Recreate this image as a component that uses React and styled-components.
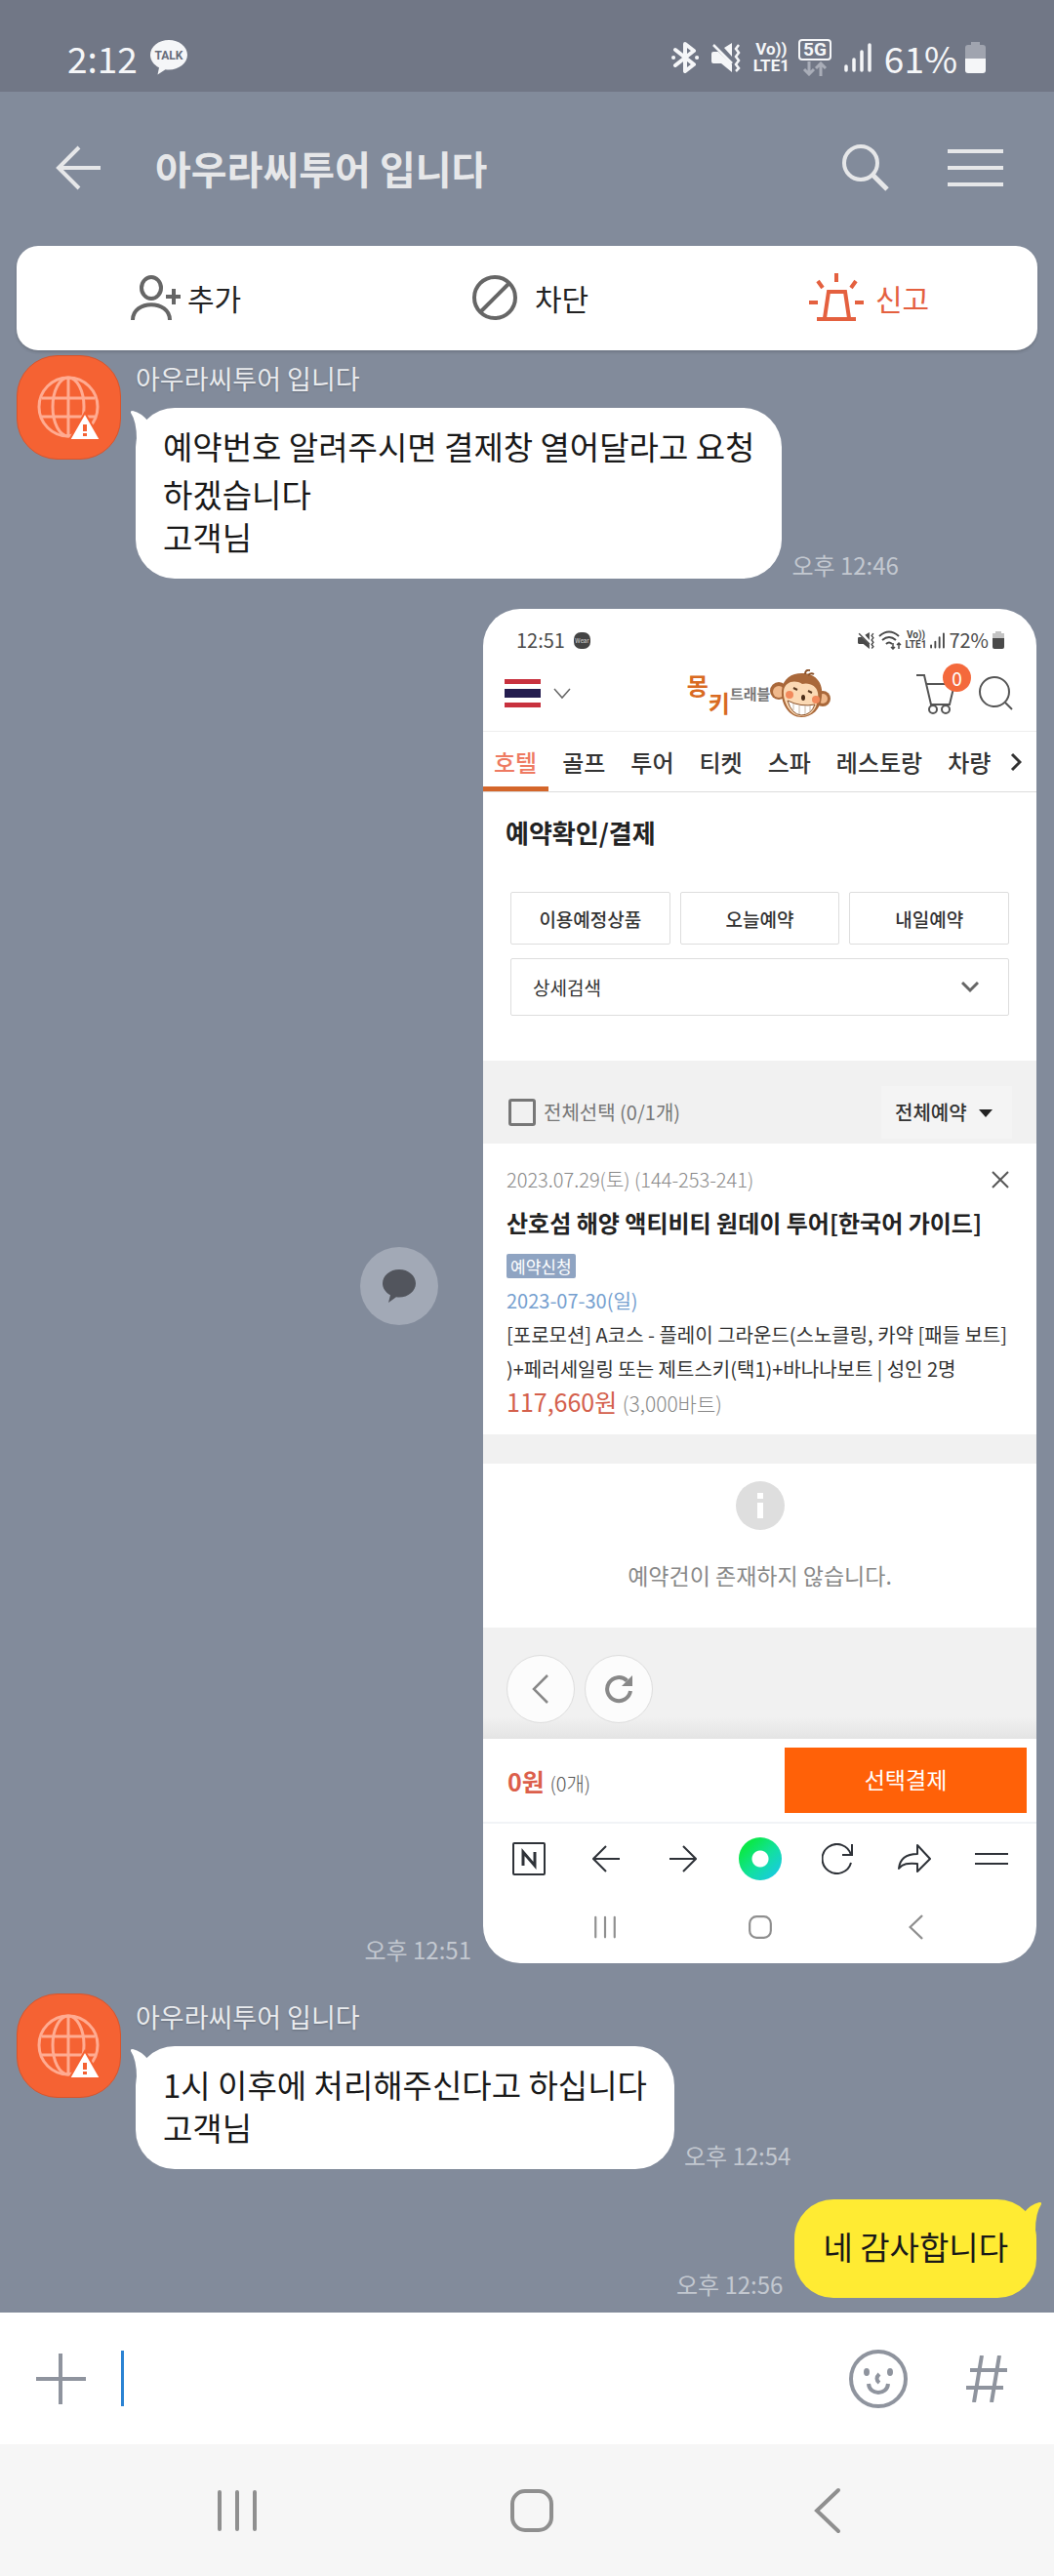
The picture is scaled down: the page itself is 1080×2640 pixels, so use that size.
import { createGlobalStyle, styled } from "styled-components";

const ORANGE = "#e4603f";

export default function App() {
  return (
    <>
      <GlobalStyle />
      <Page>
        <StatusBar />
        <Header>
          <IconButton type="button" aria-label="뒤로">
            <BackIcon />
          </IconButton>
          <h1>아우라씨투어 입니다</h1>
          <HeaderActions>
            <IconButton type="button" aria-label="검색">
              <SearchIcon />
            </IconButton>
            <IconButton type="button" aria-label="메뉴">
              <MenuIcon />
            </IconButton>
          </HeaderActions>
        </Header>
        <ActionCard>
          <ActionButton type="button" $gap={7}>
            <AddUserIcon />
            추가
          </ActionButton>
          <ActionButton type="button" $gap={18}>
            <BlockIcon />
            차단
          </ActionButton>
          <ActionButton type="button" $gap={12} $color={ORANGE}>
            <SirenIcon />
            신고
          </ActionButton>
        </ActionCard>
        <Chat>
          <Received time="오후 12:46">
            <p>
              예약번호 알려주시면 결제창 열어달라고 요청
              <br />
              하겠습니다
            </p>
            <LastLine>고객님</LastLine>
          </Received>
          <SentRow>
            <SentSide>
              <ShareButton type="button" aria-label="공유">
                <TalkShareIcon />
              </ShareButton>
              <Time>오후 12:51</Time>
            </SentSide>
            <BookingScreen />
          </SentRow>
          <Received time="오후 12:54">
            <p>1시 이후에 처리해주신다고 하십니다</p>
            <LastLine>고객님</LastLine>
          </Received>
          <SentRow>
            <Time>오후 12:56</Time>
            <SentBubble>
              네 감사합니다
              <RightTail />
            </SentBubble>
          </SentRow>
        </Chat>
        <InputBar>
          <IconButton type="button" aria-label="추가 메뉴">
            <PlusIcon />
          </IconButton>
          <Caret />
          <MessageInput type="text" aria-label="메시지 입력" />
          <IconButton type="button" aria-label="이모티콘">
            <SmileIcon />
          </IconButton>
          <IconButton type="button" aria-label="샵검색">
            <HashIcon />
          </IconButton>
        </InputBar>
        <SystemNav>
          <IconButton type="button" aria-label="최근 앱">
            <RecentsIcon size={48} />
          </IconButton>
          <IconButton type="button" aria-label="홈">
            <HomeIcon size={48} />
          </IconButton>
          <IconButton type="button" aria-label="뒤로">
            <NavBackIcon size={48} />
          </IconButton>
        </SystemNav>
      </Page>
    </>
  );
}

function StatusBar() {
  return (
    <Status>
      <span>2:12</span>
      <TalkBadge>
        <svg width="38" height="36" viewBox="0 0 38 36" fill="#f5f6f8">
          <path d="M19 0C8.500 0 0 6.800 0 15.200c0 5.500 3.600 10.300 9 13L7.500 35.500l8-5.300c1.100.1 2.300.2 3.500.2 10.500 0 19-6.800 19-15.200S29.500 0 19 0z" />
        </svg>
        <span>TALK</span>
      </TalkBadge>
      <StatusIcons>
        <svg width="28" height="32" viewBox="0 0 28 32" fill="none" stroke="#f5f6f8" strokeWidth="4" strokeLinejoin="round" strokeLinecap="round">
          <path d="M4 8l19 15-9 7V2l9 7L4 24" />
          <path d="M2 16h.1M26 16h.1" />
        </svg>
        <MuteIcon width={30} height={30} />
        <Volte $size={17}>
          <span>Vo))</span>
          <span>LTE1</span>
        </Volte>
        <FiveG>
          <span>5G</span>
          <svg width="26" height="15" viewBox="0 0 26 15" fill="none" stroke="#a9adb8" strokeWidth="3">
            <path d="M7 0v13M2 8l5 5 5-5M19 15V2M14 7l5-5 5 5" />
          </svg>
        </FiveG>
        <SignalIcon width={28} height={30} />
        <Percent>
          61%
          <svg width="21" height="32" viewBox="0 0 21 32">
            <path d="M6 0h9v3h3q3 0 3 3v12H0V6q0-3 3-3h3z" fill="#a0a4af" />
            <path d="M0 17h21v12q0 3-3 3H3q-3 0-3-3z" fill="#f5f6f8" />
          </svg>
        </Percent>
      </StatusIcons>
    </Status>
  );
}

function Received({ time, children }) {
  return (
    <ReceivedRow>
      <Avatar>
        <GlobeIcon />
      </Avatar>
      <div>
        <Sender>아우라씨투어 입니다</Sender>
        <BubbleLine>
          <Bubble>
            <LeftTail />
            {children}
          </Bubble>
          <Time>{time}</Time>
        </BubbleLine>
      </div>
    </ReceivedRow>
  );
}

const TABS = ["호텔", "골프", "투어", "티켓", "스파", "레스토랑", "차량"];

function BookingScreen() {
  return (
    <Screen>
      <ScreenStatus>
        <span>12:51</span>
        <WearBadge>Wear</WearBadge>
        <ScreenStatusIcons>
          <MuteIcon width={17} height={17} />
          <svg width="24" height="20" viewBox="0 0 24 20" fill="none" stroke="currentColor" strokeWidth="2">
            <path d="M1 6q10-9 20 0M4 10q7-6 14 0M8 14q3-3 6 0" />
            <path d="M15 13v6m-2-2l2 2 2-2M21 19v-6m-2 2l2-2 2 2" strokeWidth="1.500" />
          </svg>
          <Volte $size={10}>
            <span>Vo))</span>
            <span>LTE1</span>
          </Volte>
          <SignalIcon width={15} height={17} />
          <span>72%</span>
          <svg width="12" height="18" viewBox="0 0 12 18">
            <path d="M3 0h6v2h3v6H0V2h3z" fill="#c3c3c3" />
            <path d="M0 7h12v9q0 2-2 2H2q-2 0-2-2z" fill="#4a4a4a" />
          </svg>
        </ScreenStatusIcons>
      </ScreenStatus>
      <ShopHeader>
        <Language type="button" aria-label="국가 선택">
          <Flag />
          <svg width="18" height="12" viewBox="0 0 18 12" fill="none" stroke="#666" strokeWidth="1.500">
            <path d="M1 1l8 9 8-9" />
          </svg>
        </Language>
        <Logo href="#">
          <LogoMonkey>
            <span>몽</span>
            <span>키</span>
          </LogoMonkey>
          <LogoTravel>트래블</LogoTravel>
          <MonkeyFace />
        </Logo>
        <ShopActions>
          <CartButton type="button" aria-label="장바구니">
            <svg width="42" height="42" viewBox="0 0 42 42" fill="none" stroke="#555" strokeWidth="2">
              <path d="M0 2h8l7 30h19l5-21H10" />
              <circle cx="17" cy="37" r="4" />
              <circle cx="30" cy="37" r="4" />
            </svg>
            <CartCount>0</CartCount>
          </CartButton>
          <IconButton type="button" aria-label="검색">
            <svg width="36" height="36" viewBox="0 0 36 36" fill="none" stroke="#555" strokeWidth="2">
              <circle cx="17" cy="16" r="15" />
              <path d="M28 27l7 7" />
            </svg>
          </IconButton>
        </ShopActions>
      </ShopHeader>
      <Tabs>
        {TABS.map((tab, i) => (
          <Tab key={tab} href="#" $active={i === 0}>
            {tab}
          </Tab>
        ))}
        <svg width="12" height="20" viewBox="0 0 12 20" fill="none" stroke="#333" strokeWidth="3">
          <path d="M2 2l8 8-8 8" />
        </svg>
      </Tabs>
      <Filters>
        <h2>예약확인/결제</h2>
        <FilterButtons>
          <button type="button">이용예정상품</button>
          <button type="button">오늘예약</button>
          <button type="button">내일예약</button>
        </FilterButtons>
        <DetailSearch type="button">
          상세검색
          <svg width="18" height="12" viewBox="0 0 18 12" fill="none" stroke="#666" strokeWidth="3">
            <path d="M1 1l8 8 8-8" />
          </svg>
        </DetailSearch>
      </Filters>
      <SelectBar>
        <label>
          <input type="checkbox" />
          전체선택 (0/1개)
        </label>
        <SelectWrap>
          <select aria-label="예약 상태">
            <option>전체예약</option>
          </select>
          <svg width="14" height="8" viewBox="0 0 14 8" fill="#222">
            <path d="M0 0h14L7 8z" />
          </svg>
        </SelectWrap>
      </SelectBar>
      <Booking>
        <BookingTop>
          <span>2023.07.29(토) (144-253-241)</span>
          <IconButton type="button" aria-label="삭제">
            <svg width="18" height="18" viewBox="0 0 18 18" fill="none" stroke="#555" strokeWidth="2">
              <path d="M1 1l16 16M17 1L1 17" />
            </svg>
          </IconButton>
        </BookingTop>
        <h3>산호섬 해양 액티비티 원데이 투어[한국어 가이드]</h3>
        <Badge>예약신청</Badge>
        <BookingDate>2023-07-30(일)</BookingDate>
        <p>
          [포로모션] A코스 - 플레이 그라운드(스노클링, 카약 [패들 보트]
          <br />
          )+페러세일링 또는 제트스키(택1)+바나나보트 | 성인 2명
        </p>
        <Price>
          117,660원 <small>(3,000바트)</small>
        </Price>
      </Booking>
      <Empty>
        <svg width="50" height="50" viewBox="0 0 50 50">
          <circle cx="25" cy="25" r="25" fill="#dedede" />
          <path d="M22 12h6v6h-6zM22 22h6v16h-6z" fill="#fff" />
        </svg>
        <p>예약건이 존재하지 않습니다.</p>
      </Empty>
      <FloatingBar>
        <RoundButton type="button" aria-label="이전">
          <svg width="18" height="30" viewBox="0 0 18 30" fill="none" stroke="#888" strokeWidth="2.500">
            <path d="M16 1L2 15l14 14" />
          </svg>
        </RoundButton>
        <RoundButton type="button" aria-label="새로고침">
          <svg width="30" height="30" viewBox="0 0 30 30" fill="none" stroke="#888" strokeWidth="4">
            <path d="M27 17A12 12 0 1 1 23.500 6.500" />
            <path d="M29 1v11H18z" fill="#888" stroke="none" />
          </svg>
        </RoundButton>
      </FloatingBar>
      <PayBar>
        <Total>
          0원 <small>(0개)</small>
        </Total>
        <PayButton type="button">선택결제</PayButton>
      </PayBar>
      <BrowserNav>
        <IconButton type="button" aria-label="네이버">
          <svg width="34" height="34" viewBox="0 0 34 34" fill="none" stroke="#2e3238" strokeWidth="2">
            <rect x="1" y="1" width="32" height="32" rx="1" />
            <path d="M11 24V10l12 14V10" strokeWidth="3" />
          </svg>
        </IconButton>
        <IconButton type="button" aria-label="뒤로">
          <svg width="28" height="28" viewBox="0 0 28 28" fill="none" stroke="#2e3238" strokeWidth="2">
            <path d="M28 14H2M14 1L1 14l13 13" />
          </svg>
        </IconButton>
        <IconButton type="button" aria-label="앞으로">
          <svg width="28" height="28" viewBox="0 0 28 28" fill="none" stroke="#2e3238" strokeWidth="2">
            <path d="M0 14h26M14 1l13 13-13 13" />
          </svg>
        </IconButton>
        <GreenDot type="button" aria-label="그린닷" />
        <IconButton type="button" aria-label="새로고침">
          <svg width="32" height="32" viewBox="0 0 32 32" fill="none" stroke="#2e3238" strokeWidth="2">
            <path d="M30 20A15 15 0 1 1 30 12M31 1v11H21" />
          </svg>
        </IconButton>
        <IconButton type="button" aria-label="공유">
          <svg width="34" height="30" viewBox="0 0 34 30" fill="none" stroke="#2e3238" strokeWidth="2" strokeLinejoin="round">
            <path d="M20 1l13 14-13 13v-8C10 19 5 20 1 25 2 15 8 10 20 10z" />
          </svg>
        </IconButton>
        <IconButton type="button" aria-label="메뉴">
          <svg width="34" height="14" viewBox="0 0 34 14" fill="none" stroke="#2e3238" strokeWidth="2">
            <path d="M0 2h34M0 12h34" />
          </svg>
        </IconButton>
      </BrowserNav>
      <ScreenNav>
        <RecentsIcon size={26} />
        <HomeIcon size={26} />
        <NavBackIcon size={26} />
      </ScreenNav>
    </Screen>
  );
}

/* icons */

function BackIcon() {
  return (
    <svg width="46" height="46" viewBox="0 0 46 46" fill="none" stroke="#e6e7e9" strokeWidth="4">
      <path d="M46 23H3M24 2L3 23l21 21" />
    </svg>
  );
}

function SearchIcon() {
  return (
    <svg width="48" height="48" viewBox="0 0 48 48" fill="none" stroke="#e6e7e9" strokeWidth="4">
      <circle cx="19" cy="19" r="17" />
      <path d="M31 31l15 15" strokeWidth="5" />
    </svg>
  );
}

function MenuIcon() {
  return (
    <svg width="57" height="40" viewBox="0 0 57 40" fill="none" stroke="#e6e7e9" strokeWidth="4">
      <path d="M0 3h57M0 20h57M0 37h57" />
    </svg>
  );
}

function AddUserIcon() {
  return (
    <svg width="51" height="46" viewBox="0 0 51 46" fill="none" stroke="#666" strokeWidth="4">
      <ellipse cx="21" cy="13" rx="10" ry="11" />
      <path d="M2 46c0-21 38-21 38 0M44 14v16M36 22h15" />
    </svg>
  );
}

function BlockIcon() {
  return (
    <svg width="46" height="46" viewBox="0 0 46 46" fill="none" stroke="#666" strokeWidth="4">
      <circle cx="23" cy="23" r="21" />
      <path d="M38 8L8 38" />
    </svg>
  );
}

function SirenIcon() {
  return (
    <svg width="56" height="50" viewBox="0 0 56 50" fill="none" stroke={ORANGE} strokeWidth="4">
      <path d="M8 47h40M16 46l4-27h17l4 27M0 30h9M47 30h9M28 0v9M9 8l5 7M48 8l-5 7" />
    </svg>
  );
}

function MuteIcon(props) {
  return (
    <svg viewBox="0 0 30 30" fill="currentColor" {...props}>
      <path d="M0 11q0-2 2-2h5l14 13v8l-11-9H2q-2 0-2-2zM13 5l8-5v14z" />
      <path d="M2 2l19 19" stroke="currentColor" strokeWidth="2.500" />
      <path d="M28 2l-3 4 3 4-3 4 3 4-3 4 3 4-3 3" fill="none" stroke="currentColor" strokeWidth="2.500" />
    </svg>
  );
}

function SignalIcon(props) {
  return (
    <svg viewBox="0 0 28 30" fill="none" stroke="currentColor" strokeWidth="3.500" strokeLinecap="round" {...props}>
      <path d="M2 24v4M10 17v11M18 9v19M26 2v26" />
    </svg>
  );
}

function GlobeIcon() {
  return (
    <svg width="66" height="66" viewBox="0 0 66 66" fill="none" stroke="#ffab91" strokeWidth="3">
      <circle cx="32" cy="32" r="30" />
      <ellipse cx="32" cy="32" rx="16" ry="30" />
      <path d="M32 2v60M5 23h54M5 42h54" />
      <path d="M49 38l16 28H33z" fill="#fff" stroke="#f56233" strokeWidth="2" />
      <path d="M49 50v7M49 59v3" stroke="#f56233" strokeWidth="4" />
    </svg>
  );
}

function TalkShareIcon() {
  return (
    <svg width="34" height="34" viewBox="0 0 34 34" fill="#52555d">
      <path d="M17 0C7.600 0 0 6.400 0 14.300c0 5 3 9.300 8 12L6 34l8-5.700c1 .2 2 .3 3 .3 9.400 0 17-6.400 17-14.300S26.400 0 17 0z" />
    </svg>
  );
}

function PlusIcon() {
  return (
    <svg width="51" height="52" viewBox="0 0 51 52" fill="none" stroke="#8f949e" strokeWidth="4">
      <path d="M0 26h51M25 0v52" />
    </svg>
  );
}

function SmileIcon() {
  return (
    <svg width="60" height="60" viewBox="0 0 60 60" fill="none" stroke="#8f949e" strokeWidth="4">
      <circle cx="30" cy="30" r="28" />
      <path d="M20 35c1 12 19 12 20 0M31 25q-5 5 0 9" />
      <ellipse cx="18" cy="23" rx="3" ry="4" fill="#8f949e" stroke="none" />
      <ellipse cx="42" cy="23" rx="3" ry="4" fill="#8f949e" stroke="none" />
    </svg>
  );
}

function HashIcon() {
  return (
    <svg width="42" height="48" viewBox="0 0 42 48" fill="none" stroke="#8f949e" strokeWidth="4">
      <path d="M4 15h38M0 33h38M16 0L8 48M34 0l-8 48" />
    </svg>
  );
}

function RecentsIcon({ size }) {
  return (
    <svg width={size} height={size} viewBox="0 0 48 48" fill="none" stroke="#8f8f8f" strokeWidth="4" strokeLinecap="round">
      <path d="M6 5v38M24 5v38M42 5v38" />
    </svg>
  );
}

function HomeIcon({ size }) {
  return (
    <svg width={size} height={size} viewBox="0 0 48 48" fill="none" stroke="#8f8f8f" strokeWidth="4">
      <rect x="4" y="4" width="40" height="40" rx="13" />
    </svg>
  );
}

function NavBackIcon({ size }) {
  return (
    <svg width={size} height={size} viewBox="0 0 48 48" fill="none" stroke="#8f8f8f" strokeWidth="4" strokeLinecap="round">
      <path d="M36 3L14 24l22 21" />
    </svg>
  );
}

function MonkeyFace() {
  return (
    <svg width="62" height="50" viewBox="0 0 62 50">
      <circle cx="9" cy="22" r="9" fill="#a9683a" />
      <circle cx="9" cy="23" r="6" fill="#f0b98c" />
      <circle cx="54" cy="30" r="8" fill="#a9683a" />
      <circle cx="54" cy="30" r="5" fill="#f0b98c" />
      <path d="M12 22C13 8 24 3 35 4c12 1 20 10 18 24-1 13-10 21-21 21-12 0-21-13-20-27z" fill="#a9683a" />
      <path d="M36 5q0-5 5-4M39 6q3-3 6-1" fill="none" stroke="#8a5128" strokeWidth="2" />
      <path d="M14 22c1-9 11-12 19-7 7-2 15 2 16 9 1 5-1 8-1 11-2 9-9 13-16 13-11 0-19-15-18-26z" fill="#fbd9b4" />
      <circle cx="20" cy="26" r="4" fill="#f28a5c" />
      <circle cx="47" cy="31" r="4" fill="#f28a5c" />
      <path d="M24 19l4 2M39 22l4 2" stroke="#5b3a20" strokeWidth="2" />
      <ellipse cx="34" cy="29" rx="2" ry="3" fill="#4a2c18" />
      <path d="M18 32q14 7 28 4-4 11-14 11-10-1-14-15z" fill="#fff" stroke="#8a5128" strokeWidth="1" />
      <path d="M24 35v7M30 37v9M36 37v9M41 37v6" stroke="#c9b8a8" strokeWidth="1" />
    </svg>
  );
}

function Flag() {
  return (
    <svg width="37" height="29" viewBox="0 0 37 29">
      <path d="M0 0h37v5H0zM0 24h37v5H0z" fill="#c8313e" />
      <path d="M0 10h37v9H0z" fill="#241d4f" />
    </svg>
  );
}

function LeftTail() {
  return (
    <Tail width="22" height="30" viewBox="0 0 22 30" $side="left">
      <path d="M0 3Q-1 1 2 1Q11 3 18 12L8 30H6Q6 12 0 3z" fill="#fff" />
    </Tail>
  );
}

function RightTail() {
  return (
    <Tail width="22" height="30" viewBox="0 0 22 30" $side="right">
      <path d="M22 3Q23 1 20 1Q11 3 4 12L14 30H16Q16 12 22 3z" fill="#ffeb33" />
    </Tail>
  );
}

const GlobalStyle = createGlobalStyle`
  * {
    box-sizing: border-box;
  }
  body {
    margin: 0;
    background: #828b9b;
    font-family: "Noto Sans CJK KR", sans-serif;
  }
  h1, h2, h3, p {
    margin: 0;
  }
  button, input, select {
    font-family: inherit;
    color: inherit;
  }
  button {
    cursor: pointer;
  }
  a {
    color: inherit;
    text-decoration: none;
  }
  svg {
    display: block;
    flex: none;
  }
`;

const Page = styled.div`
  min-height: 100vh;
  display: flex;
  flex-direction: column;
  background: #828b9b;
`;

const Status = styled.div`
  display: flex;
  align-items: center;
  height: 94px;
  padding: 24px 70px 0 69px;
  background: #717786;
  color: #f5f6f8;
  font-size: 37px;
  line-height: 40px;
`;

const TalkBadge = styled.div`
  display: grid;
  margin-left: 13px;
  > * {
    grid-area: 1 / 1;
  }
  > span {
    padding-top: 8px;
    color: #666c7a;
    font-family: Roboto, sans-serif;
    font-size: 12px;
    font-weight: 700;
    line-height: 16px;
    text-align: center;
  }
`;

const StatusIcons = styled.div`
  display: flex;
  align-items: center;
  gap: 13px;
  margin-left: auto;
`;

const Volte = styled.div`
  display: flex;
  flex-direction: column;
  align-items: center;
  font-family: Roboto, sans-serif;
  font-size: ${({ $size }) => $size}px;
  font-weight: 700;
  line-height: ${({ $size }) => $size}px;
`;

const FiveG = styled.div`
  display: flex;
  flex-direction: column;
  align-items: center;
  gap: 1px;
  margin-left: -4px;
  > span {
    padding: 0 3px;
    border: 2px solid #f5f6f8;
    border-radius: 4px;
    font-family: Roboto, sans-serif;
    font-size: 19px;
    font-weight: 700;
    line-height: 18px;
  }
`;

const Percent = styled.div`
  display: flex;
  align-items: center;
  gap: 8px;
`;

const Header = styled.header`
  display: flex;
  align-items: center;
  height: 158px;
  padding: 0 52px 2px 57px;
  color: #e6e7e9;
  > h1 {
    margin-left: 56px;
    font-size: 40px;
    font-weight: 700;
    line-height: 56px;
  }
`;

const HeaderActions = styled.div`
  display: flex;
  align-items: center;
  gap: 60px;
  margin-left: auto;
`;

const IconButton = styled.button`
  display: flex;
  align-items: center;
  justify-content: center;
  padding: 0;
  border: none;
  background: none;
`;

const ActionCard = styled.div`
  display: grid;
  grid-template-columns: 29fr 30fr 28fr;
  margin: 0 17px;
  height: 107px;
  padding-right: 5px;
  border-radius: 22px;
  background: #fff;
  box-shadow: 0 2px 3px rgba(0, 0, 0, 0.15);
`;

const ActionButton = styled.button`
  display: flex;
  align-items: center;
  justify-content: center;
  gap: ${({ $gap }) => $gap}px;
  padding: 0 0 2px;
  border: none;
  background: none;
  color: ${({ $color }) => $color || "#222"};
  font-size: 30px;
`;

const Chat = styled.main`
  flex: 1;
  display: flex;
  flex-direction: column;
  gap: 31px;
  padding: 5px 18px 12px 17px;
`;

const ReceivedRow = styled.div`
  display: flex;
  align-items: flex-start;
  gap: 15px;
`;

const Avatar = styled.div`
  display: flex;
  align-items: center;
  justify-content: center;
  flex: none;
  width: 107px;
  height: 107px;
  border: 1px solid #d9542b;
  border-radius: 42px;
  background: #f56233;
`;

const Sender = styled.div`
  padding: 8px 0 14px;
  color: #e9ebee;
  font-size: 27px;
  line-height: 32px;
  text-shadow: 0 1px 2px rgba(0, 0, 0, 0.2);
`;

const BubbleLine = styled.div`
  display: flex;
  align-items: flex-end;
  gap: 10px;
`;

const Bubble = styled.div`
  position: relative;
  padding: 15px 28px 24px;
  border-radius: 40px;
  background: #fff;
  color: #191919;
  font-size: 33px;
  line-height: 49px;
`;

const LastLine = styled.p`
  line-height: 38px;
`;

const Tail = styled.svg`
  position: absolute;
  top: 2px;
  ${({ $side }) => $side}: -5px;
`;

const Time = styled.time`
  color: #c3c8d0;
  font-size: 24px;
  line-height: 28px;
  white-space: nowrap;
`;

const SentRow = styled.div`
  display: flex;
  align-items: flex-end;
  justify-content: flex-end;
  gap: 12px;
`;

const SentSide = styled.div`
  align-self: stretch;
  display: grid;
  grid-template-rows: 1fr auto 1fr;
  justify-items: end;
  > time {
    grid-row: 3;
    align-self: end;
  }
`;

const ShareButton = styled.button`
  grid-row: 2;
  display: flex;
  align-items: center;
  justify-content: center;
  width: 80px;
  height: 80px;
  margin-right: 34px;
  padding: 0;
  border: none;
  border-radius: 50%;
  background: #a2a9b6;
`;

const SentBubble = styled(Bubble)`
  padding: 24px 29px 28px;
  background: #ffeb33;
`;

const Screen = styled.section`
  flex: 0 1 567px;
  overflow: hidden;
  border-radius: 38px;
  background: #fff;
  color: #333;
`;

const ScreenStatus = styled.div`
  display: flex;
  align-items: center;
  padding: 20px 33px 0 34px;
  color: #4a4a4a;
  font-size: 20px;
  line-height: 24px;
`;

const WearBadge = styled.span`
  width: 17px;
  height: 17px;
  margin-left: 9px;
  border-radius: 7px;
  background: #444;
  color: #ddd;
  font-size: 6px;
  line-height: 17px;
  text-align: center;
`;

const ScreenStatusIcons = styled.div`
  display: flex;
  align-items: center;
  gap: 4px;
  margin-left: auto;
`;

const ShopHeader = styled.div`
  display: grid;
  grid-template-columns: 1fr auto 1fr;
  align-items: center;
  height: 82px;
  padding: 4px 24px 0 22px;
  border-bottom: 1px solid #eee;
`;

const Language = styled(IconButton)`
  justify-self: start;
  gap: 13px;
`;

const Logo = styled.a`
  display: flex;
  align-items: center;
`;

const LogoMonkey = styled.span`
  display: flex;
  color: #d96a22;
  font-size: 24px;
  font-weight: 700;
  line-height: 28px;
  > span:last-child {
    padding-top: 18px;
  }
`;

const LogoTravel = styled.span`
  color: #777;
  font-size: 15px;
  font-weight: 700;
`;

const ShopActions = styled.div`
  display: flex;
  align-items: center;
  justify-content: flex-end;
  gap: 21px;
`;

const CartButton = styled(IconButton)`
  position: relative;
`;

const CartCount = styled.span`
  position: absolute;
  top: -10px;
  right: -14px;
  width: 29px;
  height: 29px;
  border-radius: 50%;
  background: #f4693c;
  color: #fff;
  font-size: 19px;
  line-height: 29px;
`;

const Tabs = styled.nav`
  display: flex;
  align-items: stretch;
  gap: 26px;
  height: 62px;
  padding: 0 12px 0 11px;
  border-bottom: 1px solid #ddd;
  > svg {
    align-self: center;
    margin-left: -6px;
  }
`;

const Tab = styled.a`
  flex: none;
  margin: 0 ${({ $active }) => ($active ? "-12px 0 -12px" : "0")};
  padding: 0 ${({ $active }) => ($active ? "12px 0 12px" : "0")};
  border-bottom: 5px solid ${({ $active }) => ($active ? "#d4662a" : "transparent")};
  color: ${({ $active }) => ($active ? "#ee7a62" : "#333")};
  font-size: 24px;
  font-weight: 500;
  line-height: 62px;
`;

const Filters = styled.div`
  padding: 22px 28px 46px;
  > h2 {
    margin-left: -5px;
    color: #222;
    font-size: 26px;
    font-weight: 700;
    line-height: 38px;
  }
`;

const FilterButtons = styled.div`
  display: grid;
  grid-template-columns: repeat(3, 1fr);
  gap: 10px;
  margin-top: 42px;
  > button {
    height: 54px;
    padding: 0;
    border: 1px solid #ddd;
    border-radius: 2px;
    background: #fff;
    font-size: 19px;
    font-weight: 500;
  }
`;

const DetailSearch = styled.button`
  display: flex;
  align-items: center;
  justify-content: space-between;
  width: 100%;
  height: 59px;
  margin-top: 14px;
  padding: 0 30px 0 22px;
  border: 1px solid #ddd;
  border-radius: 2px;
  background: #fff;
  font-size: 19px;
`;

const SelectBar = styled.div`
  display: flex;
  align-items: center;
  justify-content: space-between;
  height: 85px;
  padding: 20px 25px 0 26px;
  background: #f1f1f1;
  > label {
    display: flex;
    align-items: center;
    gap: 8px;
    color: #777;
    font-size: 20px;
  }
  input {
    appearance: none;
    width: 28px;
    height: 28px;
    margin: 0;
    border: 3px solid #777;
    border-radius: 3px;
  }
`;

const SelectWrap = styled.div`
  position: relative;
  > select {
    appearance: none;
    height: 54px;
    padding: 0 46px 0 14px;
    border: none;
    background: #f4f4f4;
    font-size: 20px;
    font-weight: 500;
  }
  > svg {
    position: absolute;
    top: 24px;
    right: 20px;
    pointer-events: none;
  }
`;

const Booking = styled.article`
  padding: 20px 24px 16px;
  font-size: 20px;
  line-height: 35px;
  > h3 {
    margin-top: 6px;
    color: #222;
    font-size: 24px;
    font-weight: 700;
    line-height: 42px;
    white-space: nowrap;
  }
  > p {
    white-space: nowrap;
  }
`;

const BookingTop = styled.div`
  display: flex;
  align-items: center;
  justify-content: space-between;
  padding-right: 4px;
  color: #888;
  font-size: 20px;
  font-weight: 300;
  line-height: 34px;
`;

const Badge = styled.div`
  width: fit-content;
  margin-top: 11px;
  padding: 0 4px;
  border-radius: 2px;
  background: #8fa4c2;
  color: #fff;
  font-size: 17px;
  line-height: 25px;
`;

const BookingDate = styled.div`
  padding-top: 6px;
  color: #76a0cf;
  line-height: 34px;
`;

const Price = styled.div`
  color: #d4604c;
  font-size: 25px;
  line-height: 32px;
  > small {
    color: #888;
    font-size: 21px;
    font-weight: 300;
  }
`;

const Empty = styled.div`
  display: flex;
  flex-direction: column;
  align-items: center;
  gap: 29px;
  height: 198px;
  padding-top: 18px;
  border-top: 30px solid #f1f1f1;
  color: #888;
  font-size: 23px;
  line-height: 34px;
`;

const FloatingBar = styled.div`
  display: flex;
  gap: 10px;
  padding: 28px 24px 16px;
  background: linear-gradient(#f1f1f1 80%, #e4e4e4);
`;

const RoundButton = styled.button`
  display: flex;
  align-items: center;
  justify-content: center;
  width: 70px;
  height: 70px;
  padding: 0;
  border: 1px solid #ddd;
  border-radius: 50%;
  background: #fcfcfc;
`;

const PayBar = styled.div`
  display: grid;
  grid-template-columns: 1fr 248px;
  align-items: center;
  padding: 9px 10px 9px 25px;
  border-bottom: 2px solid #f1f3f6;
`;

const Total = styled.div`
  color: #dc5f4b;
  font-size: 25px;
  font-weight: 700;
  > small {
    color: #555;
    font-size: 20px;
    font-weight: 300;
  }
`;

const PayButton = styled.button`
  height: 67px;
  padding: 0 0 3px;
  border: none;
  background: #ff6108;
  color: #fff;
  font-size: 23px;
`;

const BrowserNav = styled.div`
  display: grid;
  grid-template-columns: repeat(7, 1fr);
  align-items: center;
  justify-items: center;
  height: 72px;
  padding: 0 7px;
`;

const GreenDot = styled.button`
  width: 44px;
  height: 44px;
  padding: 0;
  border: none;
  border-radius: 50%;
  background: radial-gradient(circle, #fff 8px, transparent 9px), linear-gradient(135deg, #0be84a 20%, #12e0a0 55%, #1bc3f5);
`;

const ScreenNav = styled.div`
  display: grid;
  grid-template-columns: repeat(3, 1fr);
  justify-items: center;
  padding: 21px 45px 24px;
`;

const InputBar = styled.div`
  display: flex;
  align-items: center;
  height: 135px;
  padding: 0 48px 0 37px;
  background: #fff;
  > button:last-child {
    margin-left: 60px;
  }
`;

const Caret = styled.span`
  width: 3px;
  height: 57px;
  margin-left: 36px;
  background: #2b83d3;
`;

const MessageInput = styled.input`
  flex: 1;
  min-width: 0;
  height: 60px;
  border: none;
  outline: none;
  background: none;
  color: #191919;
  font-size: 33px;
`;

const SystemNav = styled.nav`
  display: grid;
  grid-template-columns: repeat(3, 1fr);
  align-items: center;
  height: 135px;
  padding: 0 82px 0 92px;
  background: #f6f6f6;
`;
